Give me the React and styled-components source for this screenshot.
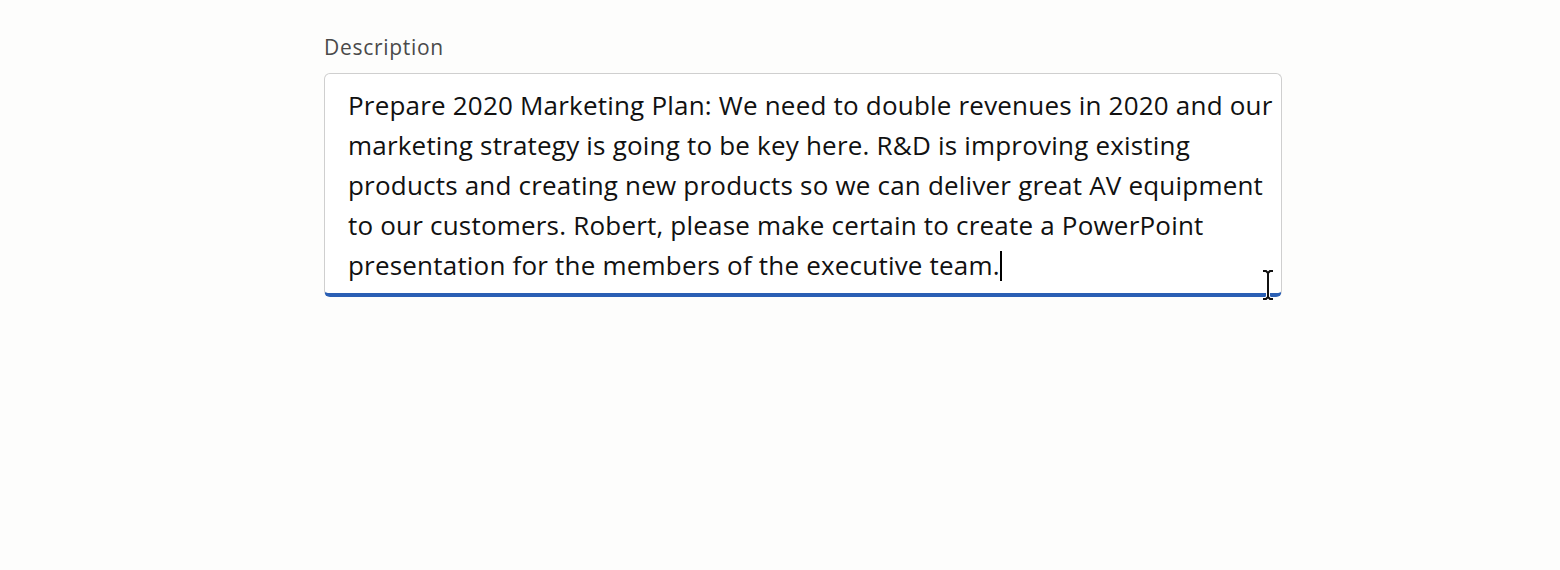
import React from "react";
import styled, { createGlobalStyle } from "styled-components";

const GlobalStyle = createGlobalStyle`
  html, body {
    margin: 0;
    padding: 0;
    background: #fdfdfc;
  }
  body {
    font-family: "Open Sans", "Noto Sans", "Liberation Sans", sans-serif;
  }
`;

const Page = styled.div`
  width: 1560px;
  height: 570px;
  padding: 35px 0 0 324px;
  box-sizing: border-box;
`;

const Field = styled.div`
  display: flex;
  flex-direction: column;
  gap: 14px;
  width: 958px;
`;

const Label = styled.label`
  font-size: 21px;
  line-height: 24px;
  color: #4a4a4a;
  letter-spacing: 0.7px;
`;

const TextBox = styled.div`
  position: relative;
  height: 224px;
  box-sizing: border-box;
  border: 1px solid #cfcfcf;
  border-bottom: 4px solid #2a5fb4;
  border-radius: 6px;
  background: #ffffff;
  padding: 11px 4px 0 23px;
  color: #111;
  font-size: 26px;
  line-height: 40px;
  letter-spacing: 0.2px;
  cursor: text;
`;

const Line = styled.div`
  white-space: nowrap;
`;

const Caret = styled.span`
  display: inline-block;
  width: 2px;
  height: 30px;
  background: #000;
  vertical-align: -6px;
`;

const Pointer = styled.svg`
  position: absolute;
  right: 6px;
  bottom: -8px;
`;

const lines = [
  "Prepare 2020 Marketing Plan: We need to double revenues in 2020 and our",
  "marketing strategy is going to be key here. R&D is improving existing",
  "products and creating new products so we can deliver great AV equipment",
  "to our customers. Robert, please make certain to create a PowerPoint",
  "presentation for the members of the executive team.",
];

export default function App() {
  return (
    <Page>
      <GlobalStyle />
      <Field>
        <Label>Description</Label>
        <TextBox>
          {lines.map((text, i) => (
            <Line key={i}>
              {text}
              {i === lines.length - 1 && <Caret />}
            </Line>
          ))}
          <Pointer width="14" height="32" viewBox="0 0 14 32">
            <path
              d="M2 2h3l2 2 2-2h3M7 4v24M2 30h3l2-2 2 2h3"
              fill="none"
              stroke="#fff"
              strokeWidth="4"
            />
            <path
              d="M2 2h3l2 2 2-2h3M7 4v24M2 30h3l2-2 2 2h3"
              fill="none"
              stroke="#111"
              strokeWidth="2"
            />
          </Pointer>
        </TextBox>
      </Field>
    </Page>
  );
}
